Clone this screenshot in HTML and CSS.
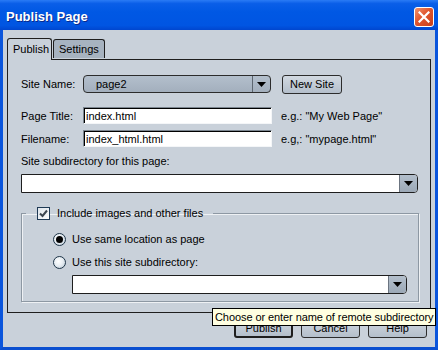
FILE: index.html
```html
<!DOCTYPE html>
<html lang="en">
<head>
    <meta charset="UTF-8">
    <meta name="viewport" content="width=device-width, initial-scale=1.0">
    <title>Publish Page</title>
    <link rel="stylesheet" href="styles.css">
</head>
<body>
<div class="window">
    <div class="titlebar">
        <span class="title">Publish Page</span>
        <span class="close">
            <svg width="12" height="12" viewBox="0 0 12 12"><path d="M1.5 1.5 L10.5 10.5 M10.5 1.5 L1.5 10.5" stroke="#fff" stroke-width="2.2" stroke-linecap="square"/></svg>
        </span>
    </div>

    <div class="frame">
        <!-- Tabs -->
        <div class="tabs">
            <div class="tab active">Publish</div>
            <div class="tab">Settings</div>
        </div>

        <div class="panel">
            <div class="row row-site">
                <span class="lbl">Site Name:</span>
                <div class="select">
                    <span class="select-text">page2</span>
                    <span class="select-arrow"><svg width="9" height="5" viewBox="0 0 9 5"><polygon points="0,0 9,0 4.5,5" fill="#000"/></svg></span>
                </div>
                <button class="btn btn-new">New Site</button>
            </div>
            <div class="row row-title">
                <span class="lbl">Page Title:</span>
                <input class="text" type="text" value="index.html">
                <span class="hint">e.g.: "My Web Page"</span>
            </div>
            <div class="row row-file">
                <span class="lbl">Filename:</span>
                <input class="text" type="text" value="index_html.html">
                <span class="hint">e.g,: "mypage.html"</span>
            </div>

            <div class="sub-lbl">Site subdirectory for this page:</div>
            <div class="combo combo-wide">
                <span class="combo-field"></span>
                <span class="combo-arrow"><svg width="9" height="5" viewBox="0 0 9 5"><polygon points="0,0 9,0 4.5,5" fill="#000"/></svg></span>
            </div>

            <!-- Include images group -->
            <fieldset class="group">
                <legend class="group-title">
                    <span class="check"><svg width="9" height="9" viewBox="0 0 9 9"><path d="M1 4.5 L3.5 7 L8 1.5" fill="none" stroke="#3c4650" stroke-width="2"/></svg></span>
                    Include images and other files
                </legend>
                <div class="radio-row radio-first">
                    <span class="radio on"></span>
                    Use same location as page
                </div>
                <div class="radio-row">
                    <span class="radio"></span>
                    Use this site subdirectory:
                </div>
                <div class="combo combo-sub">
                    <span class="combo-field"></span>
                    <span class="combo-arrow"><svg width="9" height="5" viewBox="0 0 9 5"><polygon points="0,0 9,0 4.5,5" fill="#000"/></svg></span>
                </div>
            </fieldset>
        </div>

        <div class="buttons">
            <button class="btn btn-default">Publish</button>
            <button class="btn">Cancel</button>
            <button class="btn">Help</button>
        </div>

        <div class="tooltip">Choose or enter name of remote subdirectory</div>
    </div>
</div>
</body>
</html>
```

FILE: styles.css
```css
body {
    margin: 0;
    padding: 0;
    font-family: "Liberation Sans", Arial, sans-serif;
    font-size: 11px;
    color: #000;
}
.window {
    width: 438px;
    height: 350px;
    display: flex;
    flex-direction: column;
    background-color: #c9d1da;
}
.titlebar {
    height: 30px;
    flex: none;
    display: flex;
    align-items: center;
    justify-content: space-between;
    padding: 0 4px 0 6px;
    background: linear-gradient(#2a7bf5 0, #0a5ee8 12%, #0058e4 40%, #0055e2 85%, #0046cf 100%);
}
.title {
    color: #fff;
    font-weight: bold;
    font-size: 13px;
    text-shadow: 1px 1px 0 #0a2a8c;
    padding-top: 2px;
}
.close {
    width: 20px;
    height: 20px;
    margin-top: 4px;
    box-sizing: border-box;
    border: 1px solid #fff;
    border-radius: 3px;
    background: linear-gradient(135deg, #f0936e 0, #e0552e 45%, #c8401c 100%);
    display: flex;
    align-items: center;
    justify-content: center;
}
.frame {
    flex: 1;
    position: relative;
    border-left: 3px solid #0a55dc;
    border-right: 3px solid #0a55dc;
    border-bottom: 3px solid #0a4fd0;
    padding: 8px 4px 0 4px;
}
.tabs {
    display: flex;
    align-items: flex-end;
    height: 21px;
    gap: 1px;
}
.tab {
    height: 19px;
    box-sizing: border-box;
    border: 1px solid #1e1e1e;
    border-bottom: none;
    border-radius: 3px 3px 0 0;
    padding: 3px 5px 0 5px;
    background-color: #a7b3c0;
    margin-bottom: 1px;
}
.tab.active {
    height: 22px;
    margin-bottom: -1px;
    width: 45px;
    background-color: #c9d1da;
    position: relative;
    z-index: 1;
    padding-top: 4px;
}
.panel {
    height: 254px;
    box-sizing: border-box;
    border: 1px solid #1e1e1e;
    padding: 15px 12px 0 13px;
}
.row {
    display: flex;
    align-items: center;
}
.row-site {
    height: 18px;
}
.row-title {
    height: 17px;
    margin-top: 14px;
}
.row-file {
    height: 17px;
    margin-top: 6px;
}
.lbl {
    width: 62px;
    flex: none;
}
.select {
    width: 188px;
    height: 18px;
    box-sizing: border-box;
    border: 1px solid #2c2c2c;
    border-radius: 4px;
    background: linear-gradient(#b3bfcc, #a3afbd);
    display: flex;
    align-items: center;
}
.select-text {
    flex: 1;
    padding-left: 12px;
}
.select-arrow {
    width: 17px;
    height: 100%;
    border-left: 1px solid #5d6670;
    display: flex;
    align-items: center;
    justify-content: center;
}
.btn {
    font-family: "Liberation Sans", Arial, sans-serif;
    font-size: 11px;
    color: #000;
    height: 19px;
    padding: 0;
    box-sizing: border-box;
    border: 1px solid #2c2c2c;
    border-radius: 3px;
    background: linear-gradient(#d2d9e1, #b4bfcb);
}
.btn-new {
    width: 60px;
    margin-left: 11px;
}
.text {
    width: 189px;
    height: 17px;
    box-sizing: border-box;
    margin: 0;
    padding: 0 2px;
    font-family: "Liberation Sans", Arial, sans-serif;
    font-size: 11px;
    color: #000;
    background-color: #fff;
    border: 1px solid;
    border-color: #7b858f #f4f6f8 #f4f6f8 #7b858f;
    box-shadow: inset 1px 1px 0 #000;
    outline: none;
}
.hint {
    margin-left: 9px;
}
.sub-lbl {
    margin-top: 7px;
    line-height: 14px;
}
.combo {
    display: flex;
    box-sizing: border-box;
    height: 19px;
    border: 1px solid #1e1e1e;
    border-radius: 0 4px 4px 0;
    background-color: #fff;
}
.combo-wide {
    width: 397px;
    margin-top: 6px;
}
.combo-field {
    flex: 1;
}
.combo-arrow {
    width: 17px;
    border-left: 1px solid #6b7480;
    border-radius: 0 3px 3px 0;
    background: linear-gradient(#b3bfcc, #9ba8b6);
    display: flex;
    align-items: center;
    justify-content: center;
}
.group {
    width: 398px;
    height: 96px;
    box-sizing: border-box;
    margin: 13px 0 0 0;
    padding: 0 0 0 31px;
    border: 1px solid #8d98a3;
    box-shadow: 1px 1px 0 #eef1f4, inset 1px 1px 0 #eef1f4;
}
.group-title {
    margin-left: -27px;
    padding: 0 10px 0 11px;
    display: flex;
    align-items: center;
    gap: 7px;
    line-height: 14px;
}
.check {
    width: 13px;
    height: 13px;
    box-sizing: border-box;
    border: 1px solid #1f3a55;
    background: linear-gradient(135deg, #dfe6ec, #fafbfc);
    display: flex;
    align-items: center;
    justify-content: center;
}
.radio-row {
    display: flex;
    align-items: center;
    gap: 6px;
    height: 14px;
    margin-top: 9px;
}
.radio-first {
    margin-top: 12px;
}
.radio {
    width: 13px;
    height: 13px;
    box-sizing: border-box;
    border-radius: 50%;
    border: 1px solid #1f3548;
    background: radial-gradient(circle at 40% 40%, #ffffff 0, #e8eef3 45%, #b7c6d2 100%);
    display: flex;
    align-items: center;
    justify-content: center;
}
.radio.on::after {
    content: "";
    width: 7px;
    height: 7px;
    border-radius: 50%;
    background-color: #000;
}
.combo-sub {
    width: 335px;
    margin: 6px 0 0 19px;
}
.buttons {
    display: flex;
    justify-content: flex-end;
    gap: 8px;
    margin-top: 4px;
    padding-right: 4px;
}
.buttons .btn {
    width: 59px;
    height: 21px;
}
.btn-default {
    border: 2px solid #1e1e1e;
}
.tooltip {
    position: absolute;
    left: 209px;
    top: 278px;
    width: 224px;
    height: 18px;
    box-sizing: border-box;
    border: 1px solid #000;
    background-color: #ffffe1;
    padding-left: 2px;
    font-size: 11px;
    letter-spacing: -0.08px;
    line-height: 16px;
    white-space: nowrap;
    overflow: hidden;
}
```
